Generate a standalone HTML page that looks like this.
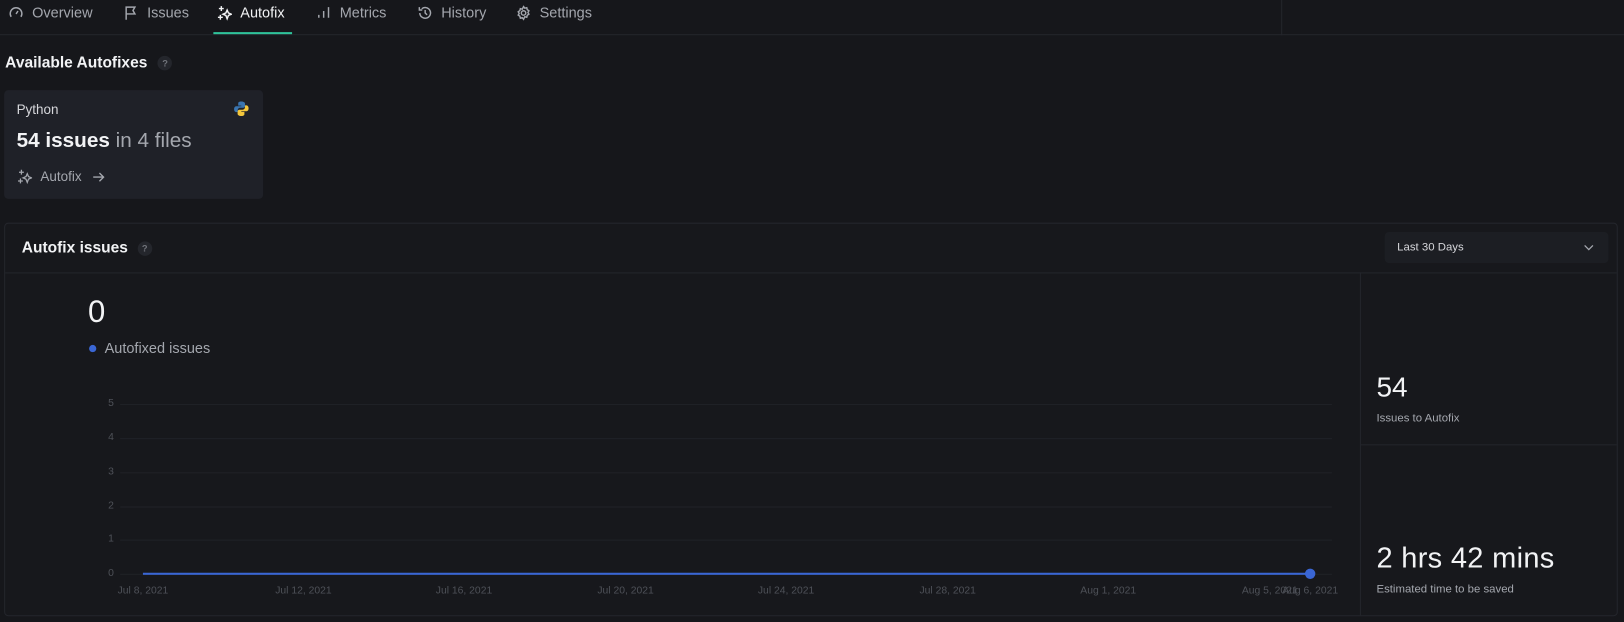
<!DOCTYPE html>
<html><head><style>
*{box-sizing:border-box;margin:0;padding:0}
html,body{width:1624px;height:622px;overflow:hidden;background:#16171b}
#w{width:1568px;height:601px;transform:scale(1.035714);transform-origin:0 0;position:relative;font-family:"Liberation Sans",sans-serif;color:#d6d7db}
.abs{position:absolute}
.nav{left:0;top:0;width:1568px;height:34px;border-bottom:1px solid #24262c}
.tab{position:absolute;top:4px;font-size:14px;color:#a4a7ae;display:flex;align-items:center;gap:8px}
.tab svg{width:15px;height:15px;stroke:#a4a7ae;fill:none;stroke-width:1.5}
.q{display:inline-block;width:14px;height:14px;border-radius:50%;background:#24262c;color:#70737a;font-size:9px;text-align:center;line-height:14px;vertical-align:middle}
.yl{position:absolute;left:98px;width:12px;text-align:right;font-size:10px;color:#4e5158}
.gl{position:absolute;left:116px;width:1170px;height:1px;background:#202227}
.xl{position:absolute;top:565px;font-size:10px;color:#4e5158;transform:translateX(-50%);white-space:nowrap}
</style></head><body><div id="w">
<div class="abs nav"></div>
<div class="abs" style="left:1237px;top:0;width:1px;height:34px;background:#24262c"></div>
<div class="tab" style="left:8px"><svg viewBox="0 0 16 16"><path d="M3 12a6 6 0 1 1 10 0"/><path d="M8 9l2-3"/></svg>Overview</div>
<div class="tab" style="left:119px"><svg viewBox="0 0 16 16"><path d="M3 15V2h9l-2 3.5 2 3.5H3"/></svg>Issues</div>
<div class="tab" style="left:209px;color:#f2f3f5"><svg viewBox="0 0 16 16" style="stroke:#f2f3f5"><path d="M5 1v5M2.5 3.5h5M11 5l1.3 3 3 1.3-3 1.3L11 14l-1.3-3.4-3-1.3 3-1.3z"/><path d="M4 10v5M1.5 12.5h5"/></svg>Autofix</div>
<div class="abs" style="left:206px;top:31px;width:76px;height:2px;background:#2fc29a"></div>
<div class="tab" style="left:305px"><svg viewBox="0 0 16 16"><path d="M3 13v-3M8 13V6M13 13V2"/></svg>Metrics</div>
<div class="tab" style="left:403px"><svg viewBox="0 0 16 16"><path d="M2.5 8a5.5 5.5 0 1 0 2-4.3M2 2v3h3M8 5v3l2 2"/></svg>History</div>
<div class="tab" style="left:498px"><svg viewBox="0 0 16 16"><circle cx="8" cy="8" r="2.3"/><path d="M8 1.5l1.3 1.6 2-.5.5 2 1.7 1.2-1 1.7 1 1.7-1.7 1.2-.5 2-2-.5L8 14.5l-1.3-1.6-2 .5-.5-2-1.7-1.2 1-1.7-1-1.7 1.7-1.2.5-2 2 .5z"/></svg>Settings</div>

<div class="abs" style="left:5px;top:52px;font-size:15px;font-weight:bold;color:#f2f3f5">Available Autofixes <span class="q" style="margin-left:6px">?</span></div>

<div class="abs" style="left:4px;top:87px;width:250px;height:105px;background:#1f2128;border-radius:4px">
 <div class="abs" style="left:12px;top:11px;font-size:13px;color:#d6d7db">Python</div>
 <svg class="abs" style="left:221px;top:10px" width="16" height="16" viewBox="0 0 16 16"><path d="M8 1c-3 0-3 1.3-3 2.2V5h3v.6H3.2C1.8 5.6 1 6.8 1 8.4s.8 2.8 2.1 2.8H4.5V9.4c0-1.3 1-2.4 2.3-2.4h3c1 0 1.8-.8 1.8-1.8V3.2C11.6 1.8 10 1 8 1z" fill="#3a75b0"/><path d="M8 15c3 0 3-1.3 3-2.2V11H8v-.6h4.8c1.4 0 2.2-1.2 2.2-2.8s-.8-2.8-2.1-2.8h-1.4v1.8c0 1.3-1 2.4-2.3 2.4h-3c-1 0-1.8.8-1.8 1.8v2C4.4 14.2 6 15 8 15z" fill="#f3c63c"/></svg>
 <div class="abs" style="left:12px;top:38px;font-size:20px;color:#f2f3f5"><b>54 issues</b> <span style="color:#a4a7ae">in 4 files</span></div>
 <div class="abs" style="left:12px;top:76px;font-size:13px;color:#a4a7ae;display:flex;align-items:center;gap:8px"><svg width="15" height="15" viewBox="0 0 16 16" fill="none" stroke="#a4a7ae" stroke-width="1.3"><path d="M5 1v5M2.5 3.5h5M11 5l1.3 3 3 1.3-3 1.3L11 14l-1.3-3.4-3-1.3 3-1.3z"/><path d="M4 10v5M1.5 12.5h5"/></svg>Autofix <svg width="12" height="10" viewBox="0 0 12 10" style="margin-left:2px"><path d="M1 5h10M7 1l4 4-4 4" fill="none" stroke="#a4a7ae" stroke-width="1.3"/></svg></div>
</div>

<div class="abs" style="left:4px;top:215px;width:1558px;height:380px;border:1px solid #24262c;border-radius:4px;background:#17181c"></div>
<div class="abs" style="left:21px;top:231px;font-size:15px;font-weight:bold;color:#f2f3f5">Autofix issues <span class="q" style="margin-left:5px">?</span></div>
<div class="abs" style="left:1337px;top:224px;width:216px;height:30px;background:#1c1e23;border-radius:4px;font-size:11px;color:#d6d7db;padding:9px 12px">Last 30 Days<svg class="abs" style="right:14px;top:11px" width="10" height="8" viewBox="0 0 10 8"><path d="M1 2l4 4 4-4" fill="none" stroke="#a4a7ae" stroke-width="1.2"/></svg></div>
<div class="abs" style="left:5px;top:263px;width:1556px;height:1px;background:#24262c"></div>
<div class="abs" style="left:1313px;top:263px;width:1px;height:331px;background:#24262c"></div>
<div class="abs" style="left:1314px;top:429px;width:247px;height:1px;background:#24262c"></div>

<div class="abs" style="left:85px;top:285px;font-size:30px;color:#f2f3f5">0</div>
<div class="abs" style="left:86px;top:328px;font-size:14px;color:#a4a7ae"><span style="display:inline-block;width:7px;height:7px;border-radius:50%;background:#3a66d4;margin-right:8px;vertical-align:middle;position:relative;top:-1px"></span>Autofixed issues</div>

<div class="gl" style="top:390px"></div><div class="yl" style="top:384px">5</div>
<div class="gl" style="top:423px"></div><div class="yl" style="top:417px">4</div>
<div class="gl" style="top:456px"></div><div class="yl" style="top:450px">3</div>
<div class="gl" style="top:489px"></div><div class="yl" style="top:483px">2</div>
<div class="gl" style="top:521px"></div><div class="yl" style="top:515px">1</div>
<div class="gl" style="top:554px"></div><div class="yl" style="top:548px">0</div>
<div class="abs" style="left:138px;top:553px;width:1127px;height:2px;background:#3a66d4"></div>
<div class="abs" style="left:1260px;top:549px;width:10px;height:10px;border-radius:50%;background:#3a66d4"></div>
<div class="xl" style="left:138px">Jul 8, 2021</div>
<div class="xl" style="left:293px">Jul 12, 2021</div>
<div class="xl" style="left:448px">Jul 16, 2021</div>
<div class="xl" style="left:604px">Jul 20, 2021</div>
<div class="xl" style="left:759px">Jul 24, 2021</div>
<div class="xl" style="left:915px">Jul 28, 2021</div>
<div class="xl" style="left:1070px">Aug 1, 2021</div>
<div class="xl" style="left:1226px">Aug 5, 2021</div>
<div class="xl" style="left:1265px">Aug 6, 2021</div>

<div class="abs" style="left:1329px;top:359px;font-size:27px;color:#f2f3f5">54</div>
<div class="abs" style="left:1329px;top:398px;font-size:11px;color:#a4a7ae">Issues to Autofix</div>
<div class="abs" style="left:1329px;top:523px;font-size:28px;color:#f2f3f5;letter-spacing:0.3px">2 hrs 42 mins</div>
<div class="abs" style="left:1329px;top:563px;font-size:11px;color:#a4a7ae">Estimated time to be saved</div>
</div></body></html>
